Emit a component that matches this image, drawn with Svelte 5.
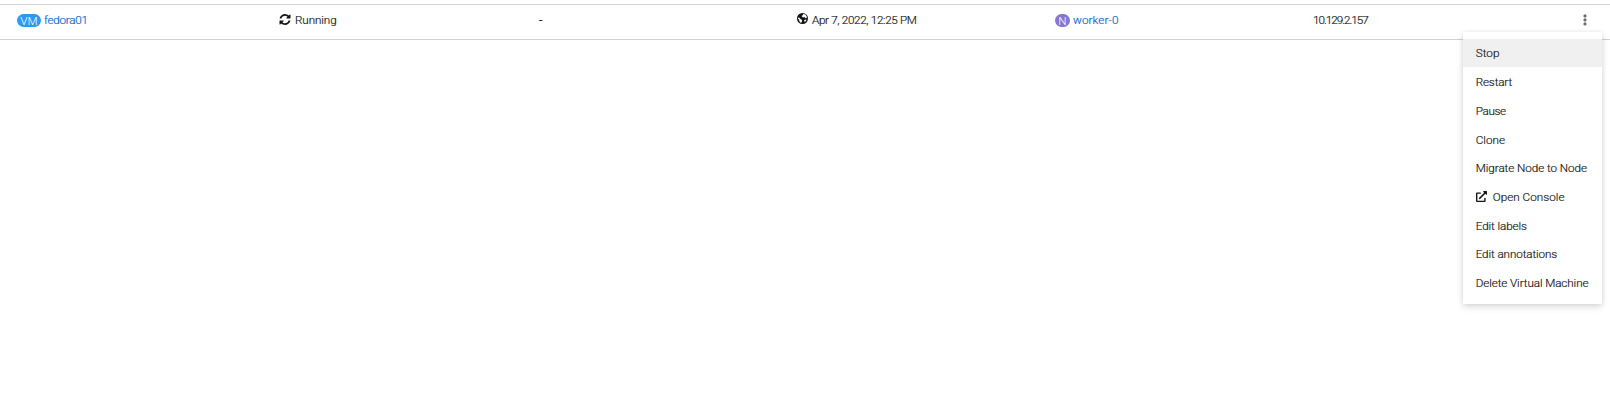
<script>
  const actions = [
    { label: 'Stop', active: true, spacing: 0.05 },
    { label: 'Restart', spacing: -0.15 },
    { label: 'Pause', spacing: -0.35 },
    { label: 'Clone', spacing: 0.02 },
    { label: 'Migrate Node to Node', spacing: -0.06 },
    { label: 'Open Console', external: true, spacing: 0.03 },
    { label: 'Edit labels', spacing: -0.1 },
    { label: 'Edit annotations', spacing: -0.11 },
    { label: 'Delete Virtual Machine', spacing: -0.1 }
  ];
</script>

<main>
<div class="row">
  <div class="cell"><span class="badge vm">VM</span><a class="name" href="#vm">fedora01</a></div>
  <div class="cell">
    <svg class="sync" viewBox="0 128 1536 1536"><path d="M1511 1056q0 5-1 7-64 268-268 434.5t-478 166.5q-146 0-282.5-55t-243.5-157l-129 129q-19 19-45 19t-45-19-19-45v-448q0-26 19-45t45-19h448q26 0 45 19t19 45-19 45l-137 137q71 66 161 102t187 36q134 0 250-65t186-179q11-17 53-117 8-23 30-23h192q13 0 22.5 9.5t9.5 22.5zm25-800v448q0 26-19 45t-45 19h-448q-26 0-45-19t-19-45 19-45l138-138q-148-137-349-137-134 0-250 65t-186 179q-11 17-53 117-8 23-30 23h-199q-13 0-22.5-9.5t-9.5-22.5v-7q65-268 270-434.5t480-166.5q146 0 284 55.5t245 156.5l130-129q19-19 45-19t45 19 19 45z" /></svg>
    <span class="status">Running</span>
  </div>
  <div class="cell"><span class="dash">-</span></div>
  <div class="cell">
    <svg class="globe" viewBox="0 0 22 22"><circle cx="11" cy="11" r="11" /><path fill="#fff" d="M12 2l5 1 3 5-2 3-3-3-3 1-3-3 3-2zM2 9l3 1 2 2 3 2 0 3-2 3-3-3-1-4-2-2zM15 14l3-1 1 1-3 4-2-2z" /></svg>
    <span class="date">Apr 7, 2022, 12:25 PM</span>
  </div>
  <div class="cell"><span class="badge node">N</span><a class="worker" href="#node">worker-0</a></div>
  <div class="cell"><span class="ip">10.129.2.157</span></div>
  <button class="kebab" aria-label="Actions">
    <svg viewBox="0 0 4 12"><circle cx="2" cy="1.9" r="1.6" /><circle cx="2" cy="5.9" r="1.6" /><circle cx="2" cy="9.9" r="1.6" /></svg>
  </button>
  <ul class="menu">
    {#each actions as action}
      <li class:active={action.active}>
        {#if action.external}
          <svg class="external" viewBox="0 0 512 512"><path d="M432,320H400a16,16,0,0,0-16,16V448H64V128H208a16,16,0,0,0,16-16V80a16,16,0,0,0-16-16H48A48,48,0,0,0,0,112V464a48,48,0,0,0,48,48H400a48,48,0,0,0,48-48V336A16,16,0,0,0,432,320ZM488,0h-128c-21.37,0-32.05,25.91-17,41l35.73,35.73L135,320.37a24,24,0,0,0,0,34L157.67,377a24,24,0,0,0,34,0L435.28,133.32,471,169c15,15,41,4.5,41-17V24A24,24,0,0,0,488,0Z" /></svg>
        {/if}
        <span style="letter-spacing: {action.spacing}px">{action.label}</span>
      </li>
    {/each}
  </ul>
</div>
</main>

<style>
  :global(body) {
    background: #fff;
  }
  main {
    box-sizing: border-box;
    height: 402px;
    padding-top: 4px;
    overflow: hidden;
  }
  .row {
    position: relative;
    box-sizing: border-box;
    height: 36px;
    border-top: 1px solid #d2d2d2;
    border-bottom: 1px solid #d2d2d2;
    padding-left: 17px;
    display: grid;
    grid-template-columns: 262px 259px 259px 258px 258px 263px 20px;
    font: 300 11.7px/18px Roboto, sans-serif;
    -webkit-text-stroke: 0.18px currentColor;
    color: #151515;
  }
  .cell {
    display: flex;
    align-items: center;
    height: 30px;
    white-space: nowrap;
  }
  a {
    color: #06c;
    text-decoration: none;
  }
  .name {
    letter-spacing: -0.25px;
  }
  .status {
    letter-spacing: -0.1px;
  }
  .date {
    letter-spacing: -0.34px;
  }
  .worker {
    letter-spacing: 0.1px;
  }
  .ip {
    letter-spacing: -1px;
  }
  .dash {
    padding-left: 1px;
    font-weight: 400;
  }
  .badge {
    box-sizing: border-box;
    height: 13px;
    border-radius: 7px;
    color: #fff;
    text-align: center;
    line-height: 14px;
    -webkit-text-stroke: 0;
  }
  .vm {
    width: 24px;
    margin-right: 3px;
    background: #2b9af3;
  }
  .node {
    width: 15px;
    margin-right: 3px;
    background: #8476d1;
  }
  svg {
    display: block;
    fill: #151515;
    flex: none;
  }
  .sync {
    width: 12px;
    height: 11px;
    margin: 0 4px 1px 0;
  }
  .globe {
    width: 11px;
    height: 11px;
    margin: 0 4px 4px 0;
  }
  .kebab {
    border: 0;
    padding: 0;
    background: none;
    height: 30px;
    display: flex;
    align-items: center;
    justify-content: center;
    width: 17px;
  }
  .kebab svg {
    width: 4px;
    height: 12px;
    fill: #6a6e73;
    margin-bottom: 1px;
  }
  .menu {
    position: absolute;
    top: 27px;
    right: 8px;
    width: 139px;
    height: 272px;
    box-sizing: border-box;
    margin: 0;
    padding: 7px 0;
    list-style: none;
    background: #fff;
    box-shadow: 0 3px 7px rgba(3, 3, 3, 0.14), 0 0 4px rgba(3, 3, 3, 0.07);
  }
  li {
    display: flex;
    align-items: center;
    height: 28.72px;
    box-sizing: border-box;
    padding: 0 0 0 12.7px;
    white-space: nowrap;
  }
  .active {
    background: linear-gradient(#f0f0f0, #f0f0f0) no-repeat 0 0 / 100% 28px;
  }
  .external {
    width: 11px;
    height: 11px;
    margin: 0 6px 1px 0;
  }
</style>
